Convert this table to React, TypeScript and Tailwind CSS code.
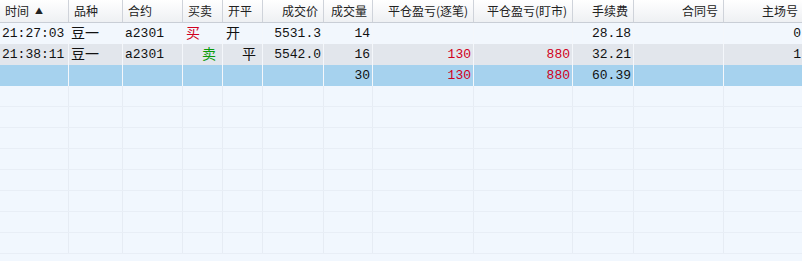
import React from "react";

type Col = { key: string; title: React.ReactNode; width: string; align: "left" | "right" };

const cols: Col[] = [
    {
        key: "time",
        title: (
            <>
                时间<span className="ml-[6px] text-[8px] leading-none">▲</span>
            </>
        ),
        width: "w-[69px]",
        align: "left",
    },
    { key: "variety", title: "品种", width: "w-[54px]", align: "left" },
    { key: "contract", title: "合约", width: "w-[60px]", align: "left" },
    { key: "side", title: "买卖", width: "w-[40px]", align: "left" },
    { key: "offset", title: "开平", width: "w-[40px]", align: "left" },
    { key: "price", title: "成交价", width: "w-[61px]", align: "right" },
    { key: "qty", title: "成交量", width: "w-[49px]", align: "right" },
    { key: "pnl1", title: "平仓盈亏(逐笔)", width: "w-[101px]", align: "right" },
    { key: "pnl2", title: "平仓盈亏(盯市)", width: "w-[99px]", align: "right" },
    { key: "fee", title: "手续费", width: "w-[61px]", align: "right" },
    { key: "contractNo", title: "合同号", width: "w-[90px]", align: "right" },
    { key: "seat", title: "主场号", width: "w-[80px]", align: "right" },
];

type Row = Record<string, React.ReactNode>;

const rows: { bg: string; cells: Row }[] = [
    {
        bg: "bg-[#f2f7fd]",
        cells: {
            time: "21:27:03",
            variety: <span className="text-[14px]">豆一</span>,
            contract: "a2301",
            side: <span className="pl-[1px] text-[14px] text-[#d00020]">买</span>,
            offset: <span className="pl-[1px] text-[14px]">开</span>,
            price: "5531.3",
            qty: "14",
            pnl1: "",
            pnl2: "",
            fee: "28.18",
            contractNo: "",
            seat: "0",
        },
    },
    {
        bg: "bg-[#e2e6ec]",
        cells: {
            time: "21:38:11",
            variety: <span className="text-[14px]">豆一</span>,
            contract: "a2301",
            side: <span className="pl-[17px] text-[14px] text-[#0a9a0a]">卖</span>,
            offset: <span className="pl-[17px] text-[14px]">平</span>,
            price: "5542.0",
            qty: "16",
            pnl1: <span className="text-[#d00020]">130</span>,
            pnl2: <span className="text-[#d00020]">880</span>,
            fee: "32.21",
            contractNo: "",
            seat: "1",
        },
    },
    {
        bg: "bg-[#a6d2ee]",
        cells: {
            time: "",
            variety: "",
            contract: "",
            side: "",
            offset: "",
            price: "",
            qty: "30",
            pnl1: <span className="text-[#d00020]">130</span>,
            pnl2: <span className="text-[#d00020]">880</span>,
            fee: "60.39",
            contractNo: "",
            seat: "",
        },
    },
];

const EMPTY_ROWS = 8;

const App: React.FC = () => {
    return (
        <div className="w-[802px] h-[261px] overflow-hidden bg-[#f1f7fe] font-['Liberation_Mono','Noto_Sans_CJK_SC',monospace]">
            <div className="w-[830px]">
                {/* header */}
                <div className="flex h-[23px] border-b border-[#c9ced6] bg-gradient-to-b from-white to-[#eef0f3]">
                    {cols.map((c) => (
                        <div
                            key={c.key}
                            className={`${c.width} shrink-0 flex items-center border-r border-[#cfd3da] px-[5px] text-[12px] text-[#222] font-['Noto_Sans_CJK_SC',sans-serif] ${c.align === "right" ? "justify-end" : "justify-start"}`}
                        >
                            {c.title}
                        </div>
                    ))}
                </div>

                {rows.map((r, i) => (
                    <div key={i} className={`flex h-[21px] ${r.bg}`}>
                        {cols.map((c) => (
                            <div
                                key={c.key}
                                className={`${c.width} shrink-0 flex items-center border-r border-[#f4f7fb] px-[2px] text-[13px] text-[#111] leading-none whitespace-nowrap ${c.align === "right" ? "justify-end" : "justify-start"}`}
                            >
                                {r.cells[c.key]}
                            </div>
                        ))}
                    </div>
                ))}

                {Array.from({ length: EMPTY_ROWS }).map((_, i) => (
                    <div key={i} className="flex h-[21px] border-b border-[#e8eef6]">
                        {cols.map((c) => (
                            <div key={c.key} className={`${c.width} shrink-0 border-r border-[#e6ecf4]`} />
                        ))}
                    </div>
                ))}
            </div>
        </div>
    );
};

export default App;
